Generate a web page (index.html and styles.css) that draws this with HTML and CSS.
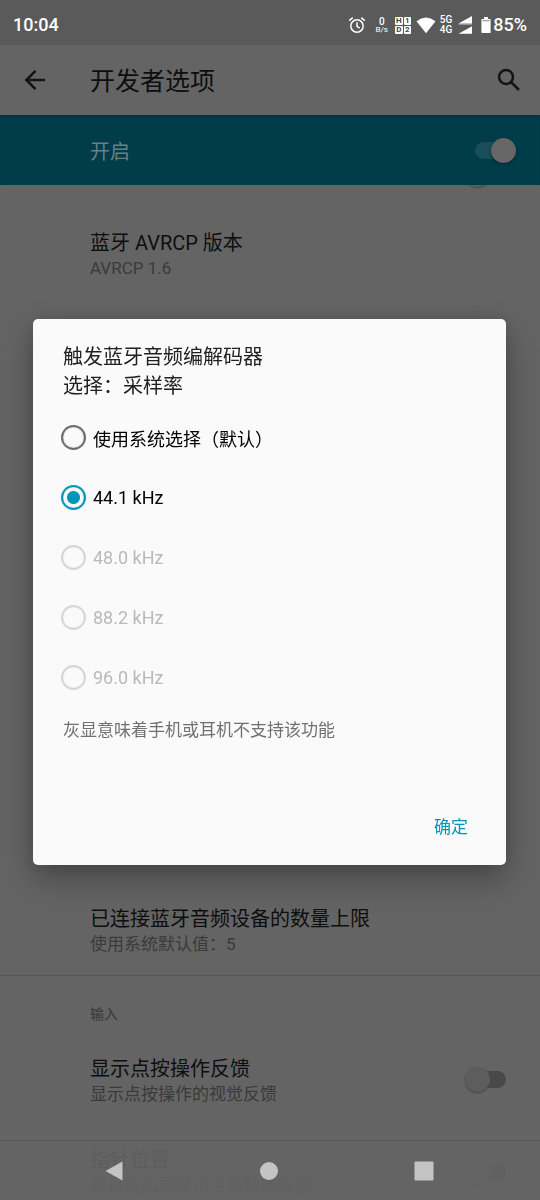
FILE: index.html
```html
<!DOCTYPE html>
<html lang="zh-CN">
<head>
<meta charset="utf-8">
<meta name="viewport" content="width=device-width, initial-scale=1">
<title>开发者选项</title>
<link rel="stylesheet" href="styles.css">
</head>
<body>
<div class="screen">
  <div class="status-bar">
    <span class="status-text">10:04</span>
    <div class="status-icons">
      <svg class="alarm" width="18" height="18" viewBox="0 0 18 18" fill="none" stroke="#fff" stroke-width="1.5">
        <circle cx="9" cy="10" r="6.2"/>
        <path d="M9 6.3V10.4L11.7 12.2M1.2 4.6L4.8 1.6M13.2 1.6L16.8 4.6"/>
      </svg>
      <span class="net-speed"><b>0</b><small>B/s</small></span>
      <span class="hd"><i>H</i><i>1</i><i>D</i><i>2</i></span>
      <svg class="wifi" width="20" height="17" viewBox="0 0 20 17" fill="#fff"><path d="M0.5 4.2Q10 -3.2 19.5 4.2L10 16.2Z"/></svg>
      <span class="generations"><span>5G</span><span>4G</span></span>
      <svg class="signal" width="15" height="20" viewBox="0 0 15 20" fill="#fff">
        <path d="M0.5 8.5L14 1V8.5ZM0.5 18.7L14 11.2V18.7Z"/>
        <path d="M0.5 8.5H14V9.7H0.5Z" opacity=".5"/>
      </svg>
      <svg class="battery" width="10" height="18" viewBox="0 0 10 18">
        <path d="M3 1H7V3H9Q9.6 3 9.6 3.7V16.3Q9.6 17 9 17H1Q.4 17 .4 16.3V3.7Q.4 3 1 3H3Z" fill="#fff"/>
        <path d="M1.4 4.2H8.6V5.2H1.4Z" fill="#8a8a8a"/>
      </svg>
      <span class="status-text">85%</span>
    </div>
  </div>

  <header class="app-bar">
    <button class="icon-button" type="button" aria-label="返回">
      <svg width="22" height="22" viewBox="0 0 22 22" fill="none" stroke="#141414" stroke-width="2.5"><path d="M21 11H2.5M11.5 1.8L2.3 11L11.5 20.2"/></svg>
    </button>
    <h1 class="app-title">开发者选项</h1>
    <button class="icon-button" type="button" aria-label="搜索">
      <svg width="24" height="24" viewBox="0 0 24 24" fill="none" stroke="#141414" stroke-width="2.5"><circle cx="9" cy="9" r="7"/><path d="M14 14L22 22"/></svg>
    </button>
  </header>

  <label class="master">
    <span class="master-label">开启</span>
    <input class="switch" type="checkbox" checked>
  </label>

  <main class="list">
    <div class="row row-cut"><input class="switch" type="checkbox" aria-label="选项"></div>
    <section class="row row-avrcp">
      <div class="row-text">
        <h2 class="row-title">蓝牙 AVRCP 版本</h2>
        <p class="row-summary">AVRCP 1.6</p>
      </div>
    </section>
    <section class="row row-limit">
      <div class="row-text">
        <h2 class="row-title">已连接蓝牙音频设备的数量上限</h2>
        <p class="row-summary">使用系统默认值：5</p>
      </div>
    </section>
    <h3 class="category">输入</h3>
    <label class="row row-touch">
      <span class="row-text">
        <span class="row-title">显示点按操作反馈</span>
        <span class="row-summary">显示点按操作的视觉反馈</span>
      </span>
      <input class="switch" type="checkbox">
    </label>
    <label class="row row-pointer">
      <span class="row-text">
        <span class="row-title">指针位置</span>
        <span class="row-summary">屏幕叠加层显示当前触摸数据</span>
      </span>
      <input class="switch" type="checkbox">
    </label>
  </main>
</div>

<div class="overlay">
  <form class="dialog" role="dialog" aria-labelledby="dialog-title">
    <h2 class="dialog-title" id="dialog-title">触发蓝牙音频编解码器<br>选择：采样率</h2>
    <div class="options">
      <label class="option"><input class="radio" type="radio" name="rate">使用系统选择（默认）</label>
      <label class="option"><input class="radio" type="radio" name="rate" checked>44.1 kHz</label>
      <label class="option option-off"><input class="radio" type="radio" name="rate" disabled>48.0 kHz</label>
      <label class="option option-off"><input class="radio" type="radio" name="rate" disabled>88.2 kHz</label>
      <label class="option option-off"><input class="radio" type="radio" name="rate" disabled>96.0 kHz</label>
    </div>
    <p class="note">灰显意味着手机或耳机不支持该功能</p>
    <div class="actions"><button class="confirm" type="button">确定</button></div>
  </form>
</div>

<nav class="nav-bar">
  <button class="nav-button" type="button" aria-label="后退"><svg width="20" height="22" viewBox="0 0 20 22"><path d="M18.5 1.5V20.5L1.5 11Z" fill="#c4c4c4"/></svg></button>
  <button class="nav-button" type="button" aria-label="主屏幕"><svg width="20" height="20" viewBox="0 0 20 20"><circle cx="10" cy="10" r="9" fill="#c4c4c4"/></svg></button>
  <button class="nav-button" type="button" aria-label="最近任务"><svg width="20" height="20" viewBox="0 0 20 20"><rect x=".5" y=".5" width="19" height="19" rx="1" fill="#c4c4c4"/></svg></button>
</nav>
</body>
</html>
```
FILE: styles.css
```css
* {
  box-sizing: border-box;
}

body {
  margin: 0;
  background: #646464;
  color: #0e0e0e;
  font-family: Roboto, "Noto Sans CJK SC", sans-serif;
}

h1, h2, h3, p {
  margin: 0;
  font-weight: 400;
}

button {
  padding: 0;
  border: 0;
  background: none;
  font-family: inherit;
}

svg {
  display: block;
}

.screen {
  height: 100vh;
  display: flex;
  flex-direction: column;
  overflow: hidden;
}

/* Status bar */
.status-bar {
  flex: none;
  height: 45px;
  padding: 5px 13px 0;
  display: flex;
  align-items: center;
  justify-content: space-between;
  background: #5a5a5a;
  color: #fff;
}

.status-text {
  font-size: 18px;
  line-height: 20px;
  font-weight: 500;
}

.status-icons {
  display: flex;
  align-items: center;
}

.alarm {
  margin-right: 10px;
}

.net-speed {
  width: 12px;
  margin-right: 7px;
  display: flex;
  flex-direction: column;
  align-items: center;
}

.net-speed b {
  font-size: 10px;
  line-height: 9px;
  font-weight: 500;
}

.net-speed small {
  font-size: 8px;
  line-height: 8px;
}

.hd {
  margin-right: 5px;
  display: grid;
  grid-template-columns: 8px 7px;
  grid-auto-rows: 8px;
  gap: 1px;
}

.hd i {
  border-radius: 1px;
  background: #fff;
  color: #444;
  font-size: 8px;
  line-height: 8px;
  font-style: normal;
  font-weight: 700;
  text-align: center;
}

.wifi {
  margin-right: 4px;
}

.generations {
  margin-right: 6px;
  display: flex;
  flex-direction: column;
  font-size: 10px;
  line-height: 10px;
  font-weight: 500;
}

.signal {
  margin-right: 8px;
}

.battery {
  margin-right: 2px;
}

/* App bar */
.app-bar {
  flex: none;
  height: 70px;
  padding: 0 19px 0 24px;
  display: flex;
  align-items: center;
}

.app-title {
  flex: 1;
  margin-left: 44px;
  padding-top: 4px;
  font-size: 25px;
  line-height: 30px;
}

.master {
  flex: none;
  height: 70px;
  padding: 0 24px 0 90px;
  display: flex;
  align-items: center;
  justify-content: space-between;
  background: #003c4a;
  box-shadow: inset 0 3px 3px -2px #00303b;
}

.master-label {
  padding-top: 4px;
  color: #6a7f84;
  font-size: 20px;
  line-height: 25px;
}

/* Switch */
.switch {
  appearance: none;
  position: relative;
  flex: none;
  width: 41px;
  height: 25px;
  margin: 0;
}

.switch::before {
  content: "";
  position: absolute;
  inset: 4px 0;
  border-radius: 9px;
  background: #494949;
}

.switch::after {
  content: "";
  position: absolute;
  top: 0;
  left: 0;
  width: 25px;
  height: 25px;
  border-radius: 50%;
  background: #5d5d5d;
  box-shadow: 0 1px 2px #444;
}

.switch:checked::before {
  background: #1a4d59;
}

.switch:checked::after {
  right: 0;
  left: auto;
  background: #666;
  box-shadow: 0 1px 3px #002630;
}

/* Preference list */
.list {
  flex: 1;
}

.row {
  padding-left: 90px;
  padding-right: 34px;
  display: flex;
  align-items: center;
  justify-content: space-between;
}

.row-text {
  display: flex;
  flex-direction: column;
}

.row-title {
  font-size: 20px;
  line-height: 25px;
}

.row-summary {
  color: #3a3a3a;
  font-size: 17px;
  line-height: 24px;
}

.row-cut {
  height: 4px;
  align-items: flex-end;
  justify-content: flex-end;
  overflow: hidden;
  padding-bottom: 2px;
}

.row-avrcp {
  padding-top: 42px;
}

.row-limit {
  padding-top: 627px;
  padding-bottom: 19px;
  border-bottom: 1px solid #585858;
}

.category {
  padding: 28px 34px 0 90px;
  color: #363636;
  font-size: 14px;
  line-height: 20px;
}

.row-touch {
  padding-top: 33px;
  padding-bottom: 34px;
  border-bottom: 1px solid #585858;
}

.row-touch .switch {
  margin-bottom: 4px;
}

.row-pointer {
  padding-top: 7px;
}

/* Dialog */
.overlay {
  position: fixed;
  inset: 0;
  padding: 45px 34px 62px 33px;
  display: flex;
  align-items: center;
}

.dialog {
  flex: 1;
  padding: 24px 28px 19px;
  border-radius: 5px;
  background: #fafafa;
  box-shadow: 0 14px 32px rgba(0, 0, 0, .3), 0 0 14px rgba(0, 0, 0, .12);
}

.dialog-title {
  padding: 0 2px 7px;
  color: #212121;
  font-size: 20px;
  line-height: 29px;
}

.option {
  height: 60px;
  display: flex;
  align-items: center;
  gap: 7px;
  color: #000;
  font-size: 18px;
}

.option-off {
  color: #b9b9b9;
}

.radio {
  appearance: none;
  flex: none;
  width: 25px;
  height: 25px;
  margin: 0;
  border: 2px solid #6d6d6d;
  border-radius: 50%;
  box-shadow: inset 0 0 1px #6d6d6d;
}

.radio:checked {
  border-color: #0396b8;
  background: radial-gradient(circle, #0396b8 6px, transparent 7px);
  box-shadow: inset 0 0 1px #0396b8;
}

.radio:disabled {
  border-color: #d6d6d6;
  box-shadow: inset 0 0 1px #d6d6d6;
}

.note {
  padding: 10px 2px 0;
  color: #707070;
  font-size: 17px;
  line-height: 25px;
}

.actions {
  padding-top: 63px;
  display: flex;
  justify-content: flex-end;
}

.confirm {
  height: 40px;
  padding: 0 10px;
  color: #0396b8;
  font-size: 17px;
}

/* Navigation bar */
.nav-bar {
  position: fixed;
  inset: auto 0 0;
  height: 59px;
  padding: 0 38px 0 36px;
  display: flex;
  background: rgba(100, 100, 100, .92);
}

.nav-button {
  flex: 1;
  display: flex;
  align-items: center;
  justify-content: center;
}
```
